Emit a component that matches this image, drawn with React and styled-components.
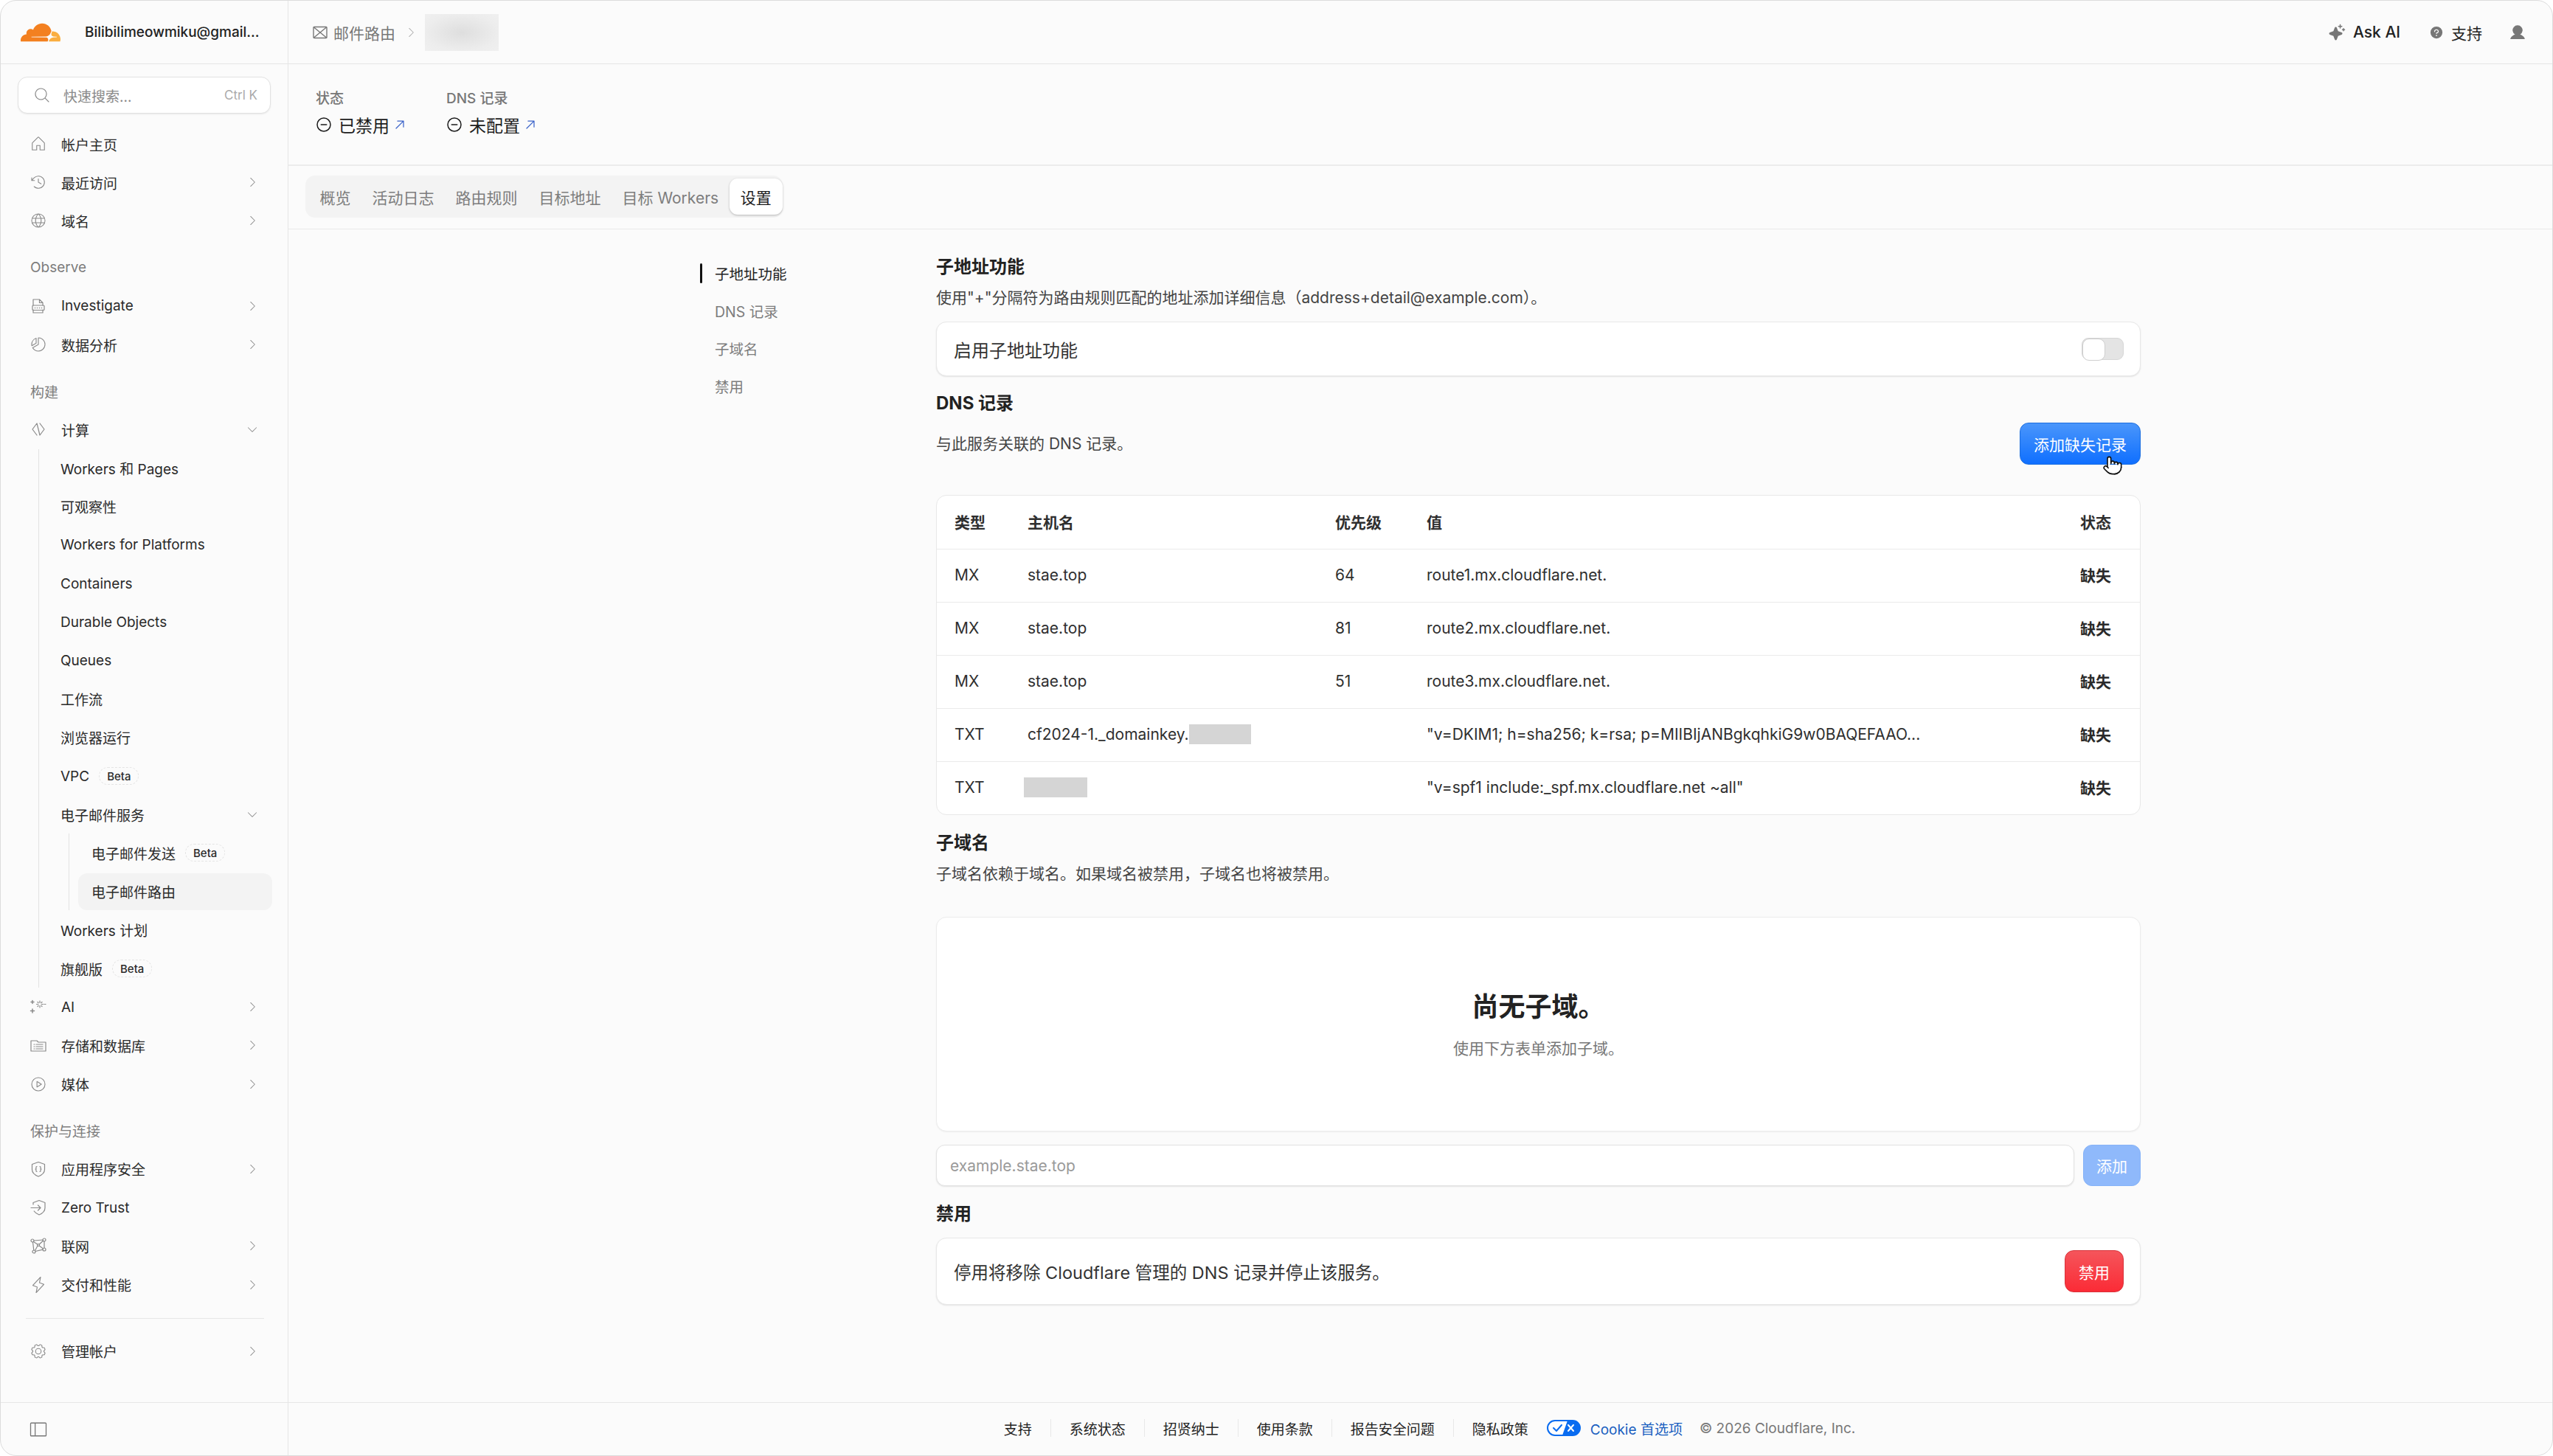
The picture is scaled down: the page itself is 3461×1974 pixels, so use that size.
import styled, { createGlobalStyle } from "styled-components";
import {
  PiHouseLight,
  PiClockCounterClockwiseLight,
  PiGlobeLight,
  PiChartPieSliceLight,
  PiPlayCircleLight,
  PiLightningLight,
  PiGearLight,
  PiSidebarSimpleLight,
  PiCaretRightLight,
  PiCaretDownLight,
  PiMagnifyingGlassLight,
  PiMinusCircle,
  PiArrowUpRight,
  PiQuestionFill,
  PiUserFill,
  PiSparkleFill,
} from "react-icons/pi";
import { Pointer } from "lucide-react";

const FONT = `Inter, "Noto Sans CJK SC", sans-serif`;

const GlobalStyle = createGlobalStyle`
  html, body { margin: 0; padding: 0; background: #fff; }
  body { font-family: ${FONT}; color: #1d1d1d; }
  * { box-sizing: border-box; }
`;

const Line = (props) => (
  <svg viewBox="0 0 24 24" width="24" height="24" fill="none" stroke="currentColor" strokeWidth="1.2" strokeLinecap="round" strokeLinejoin="round" {...props} />
);

const CloudflareLogo = () => (
  <svg viewBox="0 0 24 24" width="54" height="54">
    <path fill="#f38020" d="M16.5088 16.8447c.1475-.5068.0908-.9707-.1553-1.3154-.2246-.3164-.6045-.499-1.0615-.5205l-8.6592-.1123a.1559.1559 0 0 1-.1333-.0713c-.0283-.042-.0351-.0986-.021-.1553.0278-.084.1123-.1484.2036-.1562l8.7359-.1123c1.0351-.0489 2.1601-.8868 2.5537-1.9136l.499-1.3013c.0215-.0561.0293-.1128.0147-.168-.5625-2.5463-2.835-4.4453-5.5499-4.4453-2.5039 0-4.6284 1.6177-5.3876 3.8614-.4927-.3658-1.1187-.5625-1.794-.499-1.2026.119-2.1665 1.083-2.2861 2.2856-.0283.31-.0069.6128.0635.894C1.5683 13.171 0 14.7754 0 16.7525c0 .1748.0142.3515.0352.5273.0141.083.0844.1475.1689.1475h15.9814c.0909 0 .1758-.0645.2032-.1553l.12-.4273z" />
    <path fill="#faae40" d="M19.2656 11.2813c-.0771 0-.1611 0-.2383.0112-.0566 0-.1054.0415-.127.0976l-.3378 1.1744c-.1475.5068-.0918.9707.1543 1.3164.2256.3164.6055.498 1.0625.5195l1.8437.1133c.0557 0 .1055.0263.1329.0703.0283.043.0351.1074.0214.1562-.0283.084-.1132.1485-.204.1553l-1.921.1123c-1.041.0488-2.1582.8867-2.5527 1.914l-.1406.3585c-.0283.0713.0215.1416.0986.1416h6.5977c.0771 0 .1474-.0489.169-.126.1122-.4082.1757-.837.1757-1.2803 0-2.6025-2.125-4.727-4.7344-4.727" />
  </svg>
);

const MailCrossIcon = () => (
  <svg viewBox="0 0 20 18" width="20" height="18" fill="none" stroke="#777" strokeWidth="1.4">
    <rect x="1" y="1.5" width="18" height="15" rx="1" />
    <path d="M1.5 2l17 14M18.5 2l-17 14" />
  </svg>
);

const InvestigateIcon = () => (
  <Line>
    <path d="M5 11V3h8.5L18 7.5V11M13.5 3v4.5H18M5 17v4h13v-4" />
    <rect x="4" y="11" width="16" height="6.5" rx="1" />
    <path d="M7.5 14.5h.01M10.5 14.5h.01M13.5 14.5h.01M16.5 14.5h.01" strokeWidth="1.6" />
  </Line>
);

const ComputeIcon = () => (
  <Line>
    <path d="M10 4l-6 8 6 8M14 4l6 8-6 8M10 4l4 16" />
  </Line>
);

const SparkBurstIcon = () => (
  <Line>
    <path d="M14 4v2.5M14 10.5V13M9.5 8.5H12M16 8.5h2.500M11 5.500l1 1M16 10.500l1 1M17 5.500l-1 1M12 10.500l-1 1M20 8.500h2" />
    <path d="M4 3.500v4M2 5.500h4M4 15v5M1.500 17.500h5" strokeWidth="1.500" />
  </Line>
);

const StorageIcon = () => (
  <Line>
    <path d="M2 6h8l2 2h10v12H2z" />
    <path d="M6 11h1M6 14h1M6 17h1M9 11h9M9 14h9M9 17h9" />
  </Line>
);

const ShieldCodeIcon = () => (
  <Line>
    <path d="M12 2.500l8.500 3v7c0 4.500-3.500 7.500-8.500 9.500-5-2-8.500-5-8.500-9.500v-7z" />
    <path d="M10 8.500c-1.500 0-1 1.800-1 2.500s-.8 1-1 1 1 .3 1 1-.5 2.500 1 2.500M14 8.500c1.500 0 1 1.800 1 2.500s.8 1 1 1-1 .3-1 1 .5 2.500-1 2.500" />
  </Line>
);

const ZeroTrustIcon = () => (
  <Line>
    <path d="M5 8V5.500l8-3 8 3v7c0 4.500-3 7.500-8 9.500-3-1.200-5.300-2.800-6.800-5" />
    <path d="M2 12.500h13M11.500 9l3.500 3.500-3.500 3.500" />
  </Line>
);

const NetworkIcon = () => (
  <Line>
    <circle cx="4" cy="5" r="2" />
    <circle cx="20" cy="4" r="2" />
    <circle cx="6" cy="20" r="2" />
    <circle cx="20" cy="17" r="2" />
    <circle cx="12" cy="11" r="1.500" />
    <path d="M6 5l12-1M4.500 7l1.300 11M8 19.500l10-2.300M20 6v9M5.500 6.500l5.300 3.500M18.300 5.200l-5 4.800M7.500 18.500l3.500-6.500M18.300 15.800l-5-3.800" />
  </Line>
);

const CookieIcon = () => (
  <svg viewBox="0 0 46 22" width="46" height="22">
    <rect x="1" y="1" width="44" height="20" rx="10" fill="#fff" stroke="#0a6cf0" strokeWidth="2" />
    <path d="M28 1h7a10 10 0 0 1 0 20H21z" fill="#0a6cf0" />
    <path d="M9 11l4 4 7-8" fill="none" stroke="#0a6cf0" strokeWidth="2" strokeLinecap="round" strokeLinejoin="round" />
    <path d="M29 7l7 8M36 7l-7 8" fill="none" stroke="#fff" strokeWidth="2" strokeLinecap="round" />
  </svg>
);

const Window = styled.div`
  display: grid;
  grid-template-columns: 390px 1fr;
  width: 3461px;
  height: 1974px;
  overflow: hidden;
  background: #fbfbfb;
  border: 1px solid #dcdcdc;
  border-radius: 22px;
  font-size: 19px;
`;

const Sidebar = styled.aside`
  display: flex;
  flex-direction: column;
  border-right: 1px solid #e6e6e6;
  min-height: 0;
`;

const Brand = styled.div`
  display: flex;
  align-items: center;
  gap: 33px;
  flex: 0 0 86px;
  padding-left: 27px;
  border-bottom: 1px solid #e6e6e6;
  font-weight: 500;
  color: #222;
`;

const SearchBox = styled.div`
  display: flex;
  align-items: center;
  height: 50px;
  margin: 17px 23px 15px 23px;
  padding: 0 17px 0 20px;
  background: #fff;
  border: 1px solid #e2e2e2;
  border-radius: 13px;
  box-shadow: 0 1px 2px rgba(0, 0, 0, 0.08);
  color: #8a8a8a;
  svg { font-size: 24px; margin-right: 17px; }
`;

const SearchKey = styled.span`
  margin-left: auto;
  font-size: 17px;
  color: #aaa;
`;

const Nav = styled.nav`
  flex: 1;
  padding: 0 21px 0 24px;
`;

const Row = styled.div`
  display: flex;
  align-items: center;
  height: ${(p) => (p.$active ? "50.2px" : "52.2px")};
  margin: ${(p) => (p.$active ? "1px 0" : "0")};
  padding-left: ${(p) => p.$indent || 15}px;
  padding-right: 18px;
  border-radius: 12px;
  background: ${(p) => (p.$active ? "#f3f3f3" : "transparent")};
  color: #2a2a2a;
`;

const RowIcon = styled.span`
  display: flex;
  align-items: center;
  justify-content: center;
  width: 24px;
  height: 24px;
  margin-right: 19px;
  font-size: 24px;
  color: #8a8a8a;
`;

const RowCaret = styled.span`
  display: flex;
  margin-left: auto;
  font-size: 18px;
  color: #8a8a8a;
`;

const Beta = styled.span`
  display: inline-flex;
  align-items: center;
  height: 24px;
  margin-left: 13px;
  padding: 0 10px;
  border: 1px dashed #e4e4e4;
  border-radius: 12px;
  font-size: 15px;
  font-weight: 500;
`;

const NavLabel = styled.div`
  display: flex;
  align-items: center;
  height: 52.2px;
  margin-top: 11px;
  padding-left: 16px;
  color: #7d7d7d;
`;

const SubGroup = styled.div`
  margin-left: 27px;
  border-left: 1px solid #e3e3e3;
`;

const NestedGroup = styled.div`
  margin-left: 40px;
  padding-left: 12px;
  border-left: 1px solid #e3e3e3;
`;

const NavDivider = styled.hr`
  margin: 19px 11px 18px 10px;
  border: 0;
  border-top: 1px solid #e6e6e6;
`;

const SidebarFoot = styled.div`
  display: flex;
  align-items: center;
  flex: 0 0 72px;
  padding-left: 37px;
  border-top: 1px solid #e6e6e6;
  font-size: 28px;
  color: #777;
`;

const Main = styled.main`
  display: flex;
  flex-direction: column;
  min-width: 0;
  min-height: 0;
`;

const TopBar = styled.header`
  display: flex;
  align-items: center;
  flex: 0 0 86px;
  padding: 0 35px 0 33px;
  border-bottom: 1px solid #e6e6e6;
`;

const Crumb = styled.span`
  display: flex;
  align-items: center;
  gap: 8px;
  font-size: 21px;
  color: #777;
`;

const CrumbCaret = styled.span`
  display: flex;
  margin: 0 10px 0 12px;
  font-size: 18px;
  color: #aaa;
`;

const BlurBlock = styled.span`
  width: 100px;
  height: 50px;
  background: radial-gradient(ellipse at center, #dedede 0%, #ededed 70%, #f0f0f0 100%);
`;

const TopActions = styled.div`
  display: flex;
  align-items: center;
  margin-left: auto;
  font-size: 21px;
`;

const TopAction = styled.span`
  display: flex;
  align-items: center;
  gap: ${(p) => p.$gap}px;
  margin-left: ${(p) => p.$left}px;
  font-weight: ${(p) => p.$weight || 400};
  color: #222;
  svg { color: #777; font-size: ${(p) => p.$icon}px; }
`;

const StatusStrip = styled.section`
  display: flex;
  gap: 53px;
  flex: 0 0 138px;
  padding: 33px 0 0 37px;
  border-bottom: 2px solid #ececec;
`;

const StatusLabel = styled.div`
  height: 28px;
  line-height: 28px;
  font-weight: 500;
  color: #777;
`;

const StatusValue = styled.div`
  display: flex;
  align-items: center;
  height: 40px;
  margin-top: 1px;
  font-size: 23px;
  color: #1d1d1d;
  svg:first-child { font-size: 24px; margin-right: 8px; margin-left: -1px; }
  svg:last-child { font-size: 20px; margin-left: 4px; color: #3b63c9; }
`;

const TabStrip = styled.div`
  display: flex;
  align-items: center;
  flex: 0 0 86px;
  padding: 0 0 2px 23px;
  border-bottom: 1px solid #e8e8e8;
`;

const Tabs = styled.div`
  display: flex;
  align-items: center;
  height: 57px;
  padding-left: 5px;
  background: #f3f3f3;
  border-radius: 13px;
`;

const Tab = styled.span`
  display: flex;
  align-items: center;
  height: 49px;
  padding: 0 ${(p) => (p.$active ? 15 : 14.5)}px;
  border-radius: 11px;
  font-size: 21px;
  color: ${(p) => (p.$active ? "#1d1d1d" : "#7d7d7d")};
  background: ${(p) => (p.$active ? "#fff" : "transparent")};
  box-shadow: ${(p) => (p.$active ? "0 1px 3px rgba(0,0,0,.25)" : "none")};
`;

const Body = styled.div`
  flex: 1;
  min-height: 0;
  display: grid;
  grid-template-columns: 320px 1633px;
  justify-content: center;
`;

const SideAnchors = styled.ul`
  margin: 34px 0 0;
  padding: 0;
  list-style: none;
  font-size: 19.5px;
`;

const Anchor = styled.li`
  display: flex;
  align-items: center;
  height: 51px;
  padding-left: 20px;
  color: ${(p) => (p.$active ? "#222" : "#7d7d7d")};
  position: relative;
  ${(p) =>
    p.$active &&
    `&::before {
      content: "";
      position: absolute;
      left: 0;
      top: 12px;
      width: 3px;
      height: 27px;
      border-radius: 2px;
      background: #111;
    }`}
`;

const Content = styled.div`
  padding-top: 35px;
  font-size: 21px;
`;

const SectionTitle = styled.h2`
  margin: ${(p) => p.$top || 0}px 0 ${(p) => p.$bottom || 0}px;
  height: 32px;
  line-height: 32px;
  font-size: 24px;
  font-weight: 700;
  color: #222;
`;

const Hint = styled.p`
  margin: 0 0 ${(p) => p.$bottom || 0}px;
  height: 28px;
  line-height: 28px;
  color: #444;
`;

const Card = styled.div`
  display: flex;
  align-items: center;
  justify-content: space-between;
  height: ${(p) => p.$height}px;
  padding: 0 22px 0 23px;
  background: #fff;
  border: 1px solid #e8e8e8;
  border-radius: 14px;
  box-shadow: 0 1px 2px rgba(0, 0, 0, 0.1);
  font-size: ${(p) => p.$font}px;
  color: #333;
`;

const Toggle = styled.span`
  display: flex;
  width: 57px;
  height: 30px;
  background: #e4e4e4;
  border: 1px solid #d6d6d6;
  border-radius: 9px;
  &::before {
    content: "";
    width: 29px;
    height: 28px;
    background: #fff;
    border: 1px solid #cfcfcf;
    border-radius: 9px;
  }
`;

const DnsHead = styled.div`
  display: flex;
  align-items: center;
  justify-content: space-between;
  margin: 10px 0 41px;
`;

const ActionButton = styled.button`
  position: relative;
  height: ${(p) => p.$height}px;
  padding: 0 ${(p) => p.$pad}px;
  border: 1px solid ${(p) => p.$edge};
  border-radius: 12px;
  background: ${(p) => p.$fill};
  font: inherit;
  font-size: 21px;
  color: #fff;
`;

const HandCursor = styled.span`
  position: absolute;
  right: 23px;
  bottom: -16px;
  display: flex;
  color: #111;
  svg { fill: #fff; }
`;

const Table = styled.div`
  background: #fff;
  border: 1px solid #e8e8e8;
  border-radius: 14px;
  overflow: hidden;
`;

const TableRow = styled.div`
  display: grid;
  grid-template-columns: 99px 417px 124px 1fr 81px;
  align-items: center;
  height: 72px;
  padding: 0 0 3px 24px;
  color: #2f2f2f;
  font-weight: ${(p) => (p.$head ? 700 : 400)};
  & + & { border-top: 1px solid #ebebeb; }
`;

const Strong = styled.span`
  font-weight: 700;
  color: #2a2a2a;
`;

const HostCell = styled.span`
  display: flex;
  align-items: center;
`;

const Redacted = styled.span`
  width: ${(p) => p.$w}px;
  height: 27px;
  margin-left: ${(p) => p.$left || 0}px;
  background: #d5d5d5;
`;

const EmptyCard = styled.div`
  display: flex;
  flex-direction: column;
  align-items: center;
  height: 291px;
  margin-top: 44px;
  padding-top: 100px;
  background: #fff;
  border: 1px solid #ececec;
  border-radius: 14px;
  box-shadow: 0 1px 2px rgba(0, 0, 0, 0.05);
`;

const EmptyTitle = styled.div`
  height: 42px;
  line-height: 42px;
  font-size: 36px;
  font-weight: 700;
  color: #222;
`;

const EmptyHint = styled.div`
  margin-top: 19px;
  color: #777;
`;

const AddRow = styled.div`
  display: grid;
  grid-template-columns: 1fr 78px;
  gap: 12px;
  margin-top: 18px;
`;

const DomainInput = styled.input`
  height: 56px;
  padding: 0 18px;
  background: #fff;
  border: 1px solid #e2e2e2;
  border-radius: 12px;
  box-shadow: 0 1px 2px rgba(0, 0, 0, 0.1);
  font: inherit;
  font-size: 21px;
  &::placeholder { color: #9a9a9a; opacity: 1; }
`;

const Footer = styled.footer`
  display: flex;
  align-items: center;
  justify-content: center;
  flex: 0 0 72px;
  padding-bottom: 3px;
  border-top: 1px solid #e6e6e6;
  color: #222;
`;

const FooterLink = styled.span`
  display: flex;
  align-items: center;
  height: 24px;
  padding: 0 25px;
  & + & { border-left: 1px solid #e8e8e8; }
  &:last-of-type { padding-right: 23px; }
`;

const CookieLink = styled.span`
  display: flex;
  align-items: center;
  gap: 13px;
  color: #1a5fc0;
`;

const Copyright = styled.span`
  margin-left: 23px;
  color: #777;
`;

const NavRow = ({ icon, children, caret, beta, indent, active }) => (
  <Row $indent={indent} $active={active}>
    {icon && <RowIcon>{icon}</RowIcon>}
    <span>{children}</span>
    {beta && <Beta>Beta</Beta>}
    {caret === "right" && <RowCaret><PiCaretRightLight /></RowCaret>}
    {caret === "down" && <RowCaret><PiCaretDownLight /></RowCaret>}
  </Row>
);

const records = [
  { type: "MX", host: "stae.top", priority: "64", value: "route1.mx.cloudflare.net." },
  { type: "MX", host: "stae.top", priority: "81", value: "route2.mx.cloudflare.net." },
  { type: "MX", host: "stae.top", priority: "51", value: "route3.mx.cloudflare.net." },
  { type: "TXT", host: "cf2024-1._domainkey.", blur: 84, value: '"v=DKIM1; h=sha256; k=rsa; p=MIIBIjANBgkqhkiG9w0BAQEFAAO...' },
  { type: "TXT", blur: 86, blurLeft: -5, value: '"v=spf1 include:_spf.mx.cloudflare.net ~all"' },
];

const workers = ["Workers 和 Pages", "可观察性", "Workers for Platforms", "Containers", "Durable Objects", "Queues", "工作流", "浏览器运行"];

const App = () => {
  return (
    <>
      <GlobalStyle />
      <Window>
        <Sidebar>
          <Brand>
            <CloudflareLogo />
            <span>Bilibilimeowmiku@gmail...</span>
          </Brand>
          <SearchBox>
            <PiMagnifyingGlassLight />
            <span>快速搜索...</span>
            <SearchKey>Ctrl K</SearchKey>
          </SearchBox>
          <Nav>
            <NavRow icon={<PiHouseLight />}>帐户主页</NavRow>
            <NavRow icon={<PiClockCounterClockwiseLight />} caret="right">最近访问</NavRow>
            <NavRow icon={<PiGlobeLight />} caret="right">域名</NavRow>
            <NavLabel>Observe</NavLabel>
            <NavRow icon={<InvestigateIcon />} caret="right">Investigate</NavRow>
            <NavRow icon={<PiChartPieSliceLight />} caret="right">数据分析</NavRow>
            <NavLabel>构建</NavLabel>
            <NavRow icon={<ComputeIcon />} caret="down">计算</NavRow>
            <SubGroup>
              {workers.map((name) => (
                <NavRow key={name} indent={29}>{name}</NavRow>
              ))}
              <NavRow indent={29} beta>VPC</NavRow>
              <NavRow indent={29} caret="down">电子邮件服务</NavRow>
              <NestedGroup>
                <NavRow indent={18} beta>电子邮件发送</NavRow>
                <NavRow indent={18} active>电子邮件路由</NavRow>
              </NestedGroup>
              <NavRow indent={29}>Workers 计划</NavRow>
              <NavRow indent={29} beta>旗舰版</NavRow>
            </SubGroup>
            <NavRow icon={<SparkBurstIcon />} caret="right">AI</NavRow>
            <NavRow icon={<StorageIcon />} caret="right">存储和数据库</NavRow>
            <NavRow icon={<PiPlayCircleLight />} caret="right">媒体</NavRow>
            <NavLabel>保护与连接</NavLabel>
            <NavRow icon={<ShieldCodeIcon />} caret="right">应用程序安全</NavRow>
            <NavRow icon={<ZeroTrustIcon />}>Zero Trust</NavRow>
            <NavRow icon={<NetworkIcon />} caret="right">联网</NavRow>
            <NavRow icon={<PiLightningLight />} caret="right">交付和性能</NavRow>
            <NavDivider />
            <NavRow icon={<PiGearLight />} caret="right">管理帐户</NavRow>
          </Nav>
          <SidebarFoot>
            <PiSidebarSimpleLight />
          </SidebarFoot>
        </Sidebar>

        <Main>
          <TopBar>
            <Crumb>
              <MailCrossIcon />
              邮件路由
            </Crumb>
            <CrumbCaret><PiCaretRightLight /></CrumbCaret>
            <BlurBlock />
            <TopActions>
              <TopAction $gap={10} $icon={24} $weight={500}>
                <PiSparkleFill />
                Ask AI
              </TopAction>
              <TopAction $gap={10} $left={39} $icon={20}>
                <PiQuestionFill />
                支持
              </TopAction>
              <TopAction $gap={0} $left={36} $icon={24}>
                <PiUserFill />
              </TopAction>
            </TopActions>
          </TopBar>

          <StatusStrip>
            <div>
              <StatusLabel>状态</StatusLabel>
              <StatusValue>
                <PiMinusCircle />
                已禁用
                <PiArrowUpRight />
              </StatusValue>
            </div>
            <div>
              <StatusLabel>DNS 记录</StatusLabel>
              <StatusValue>
                <PiMinusCircle />
                未配置
                <PiArrowUpRight />
              </StatusValue>
            </div>
          </StatusStrip>

          <TabStrip>
            <Tabs>
              <Tab>概览</Tab>
              <Tab>活动日志</Tab>
              <Tab>路由规则</Tab>
              <Tab>目标地址</Tab>
              <Tab>目标 Workers</Tab>
              <Tab $active>设置</Tab>
            </Tabs>
          </TabStrip>

          <Body>
            <SideAnchors>
              <Anchor $active>子地址功能</Anchor>
              <Anchor>DNS 记录</Anchor>
              <Anchor>子域名</Anchor>
              <Anchor>禁用</Anchor>
            </SideAnchors>

            <Content>
              <SectionTitle $bottom={12}>子地址功能</SectionTitle>
              <Hint $bottom={18}>使用"+"分隔符为路由规则匹配的地址添加详细信息（address+detail@example.com）。</Hint>
              <Card $height={74} $font={24}>
                启用子地址功能
                <Toggle />
              </Card>

              <SectionTitle $top={21}>DNS 记录</SectionTitle>
              <DnsHead>
                <Hint>与此服务关联的 DNS 记录。</Hint>
                <ActionButton $height={57} $pad={18} $edge="#1d6fe0" $fill="linear-gradient(#4a96fb, #0f6fff)">
                  添加缺失记录
                  <HandCursor><Pointer size={28} strokeWidth={1.4} /></HandCursor>
                </ActionButton>
              </DnsHead>

              <Table>
                <TableRow $head>
                  <span>类型</span>
                  <span>主机名</span>
                  <span>优先级</span>
                  <span>值</span>
                  <span>状态</span>
                </TableRow>
                {records.map((r) => (
                  <TableRow key={r.value}>
                    <span>{r.type}</span>
                    <HostCell>
                      {r.host}
                      {r.blur && <Redacted $w={r.blur} $left={r.blurLeft} />}
                    </HostCell>
                    <span>{r.priority}</span>
                    <span>{r.value}</span>
                    <Strong>缺失</Strong>
                  </TableRow>
                ))}
              </Table>

              <SectionTitle $top={22} $bottom={12}>子域名</SectionTitle>
              <Hint>子域名依赖于域名。如果域名被禁用，子域名也将被禁用。</Hint>
              <EmptyCard>
                <EmptyTitle>尚无子域。</EmptyTitle>
                <EmptyHint>使用下方表单添加子域。</EmptyHint>
              </EmptyCard>

              <AddRow>
                <DomainInput placeholder="example.stae.top" />
                <ActionButton $height={56} $pad={0} $edge="#86b3f8" $fill="#8fb9fb">添加</ActionButton>
              </AddRow>

              <SectionTitle $top={22} $bottom={16}>禁用</SectionTitle>
              <Card $height={91} $font={23.5}>
                停用将移除 Cloudflare 管理的 DNS 记录并停止该服务。
                <ActionButton $height={57} $pad={18} $edge="#d8323a" $fill="linear-gradient(#f5555b, #fb2b36)">禁用</ActionButton>
              </Card>
            </Content>
          </Body>

          <Footer>
            <FooterLink>支持</FooterLink>
            <FooterLink>系统状态</FooterLink>
            <FooterLink>招贤纳士</FooterLink>
            <FooterLink>使用条款</FooterLink>
            <FooterLink>报告安全问题</FooterLink>
            <FooterLink>隐私政策</FooterLink>
            <CookieLink>
              <CookieIcon />
              Cookie 首选项
            </CookieLink>
            <Copyright>© 2026 Cloudflare, Inc.</Copyright>
          </Footer>
        </Main>
      </Window>
    </>
  );
};

export default App;
